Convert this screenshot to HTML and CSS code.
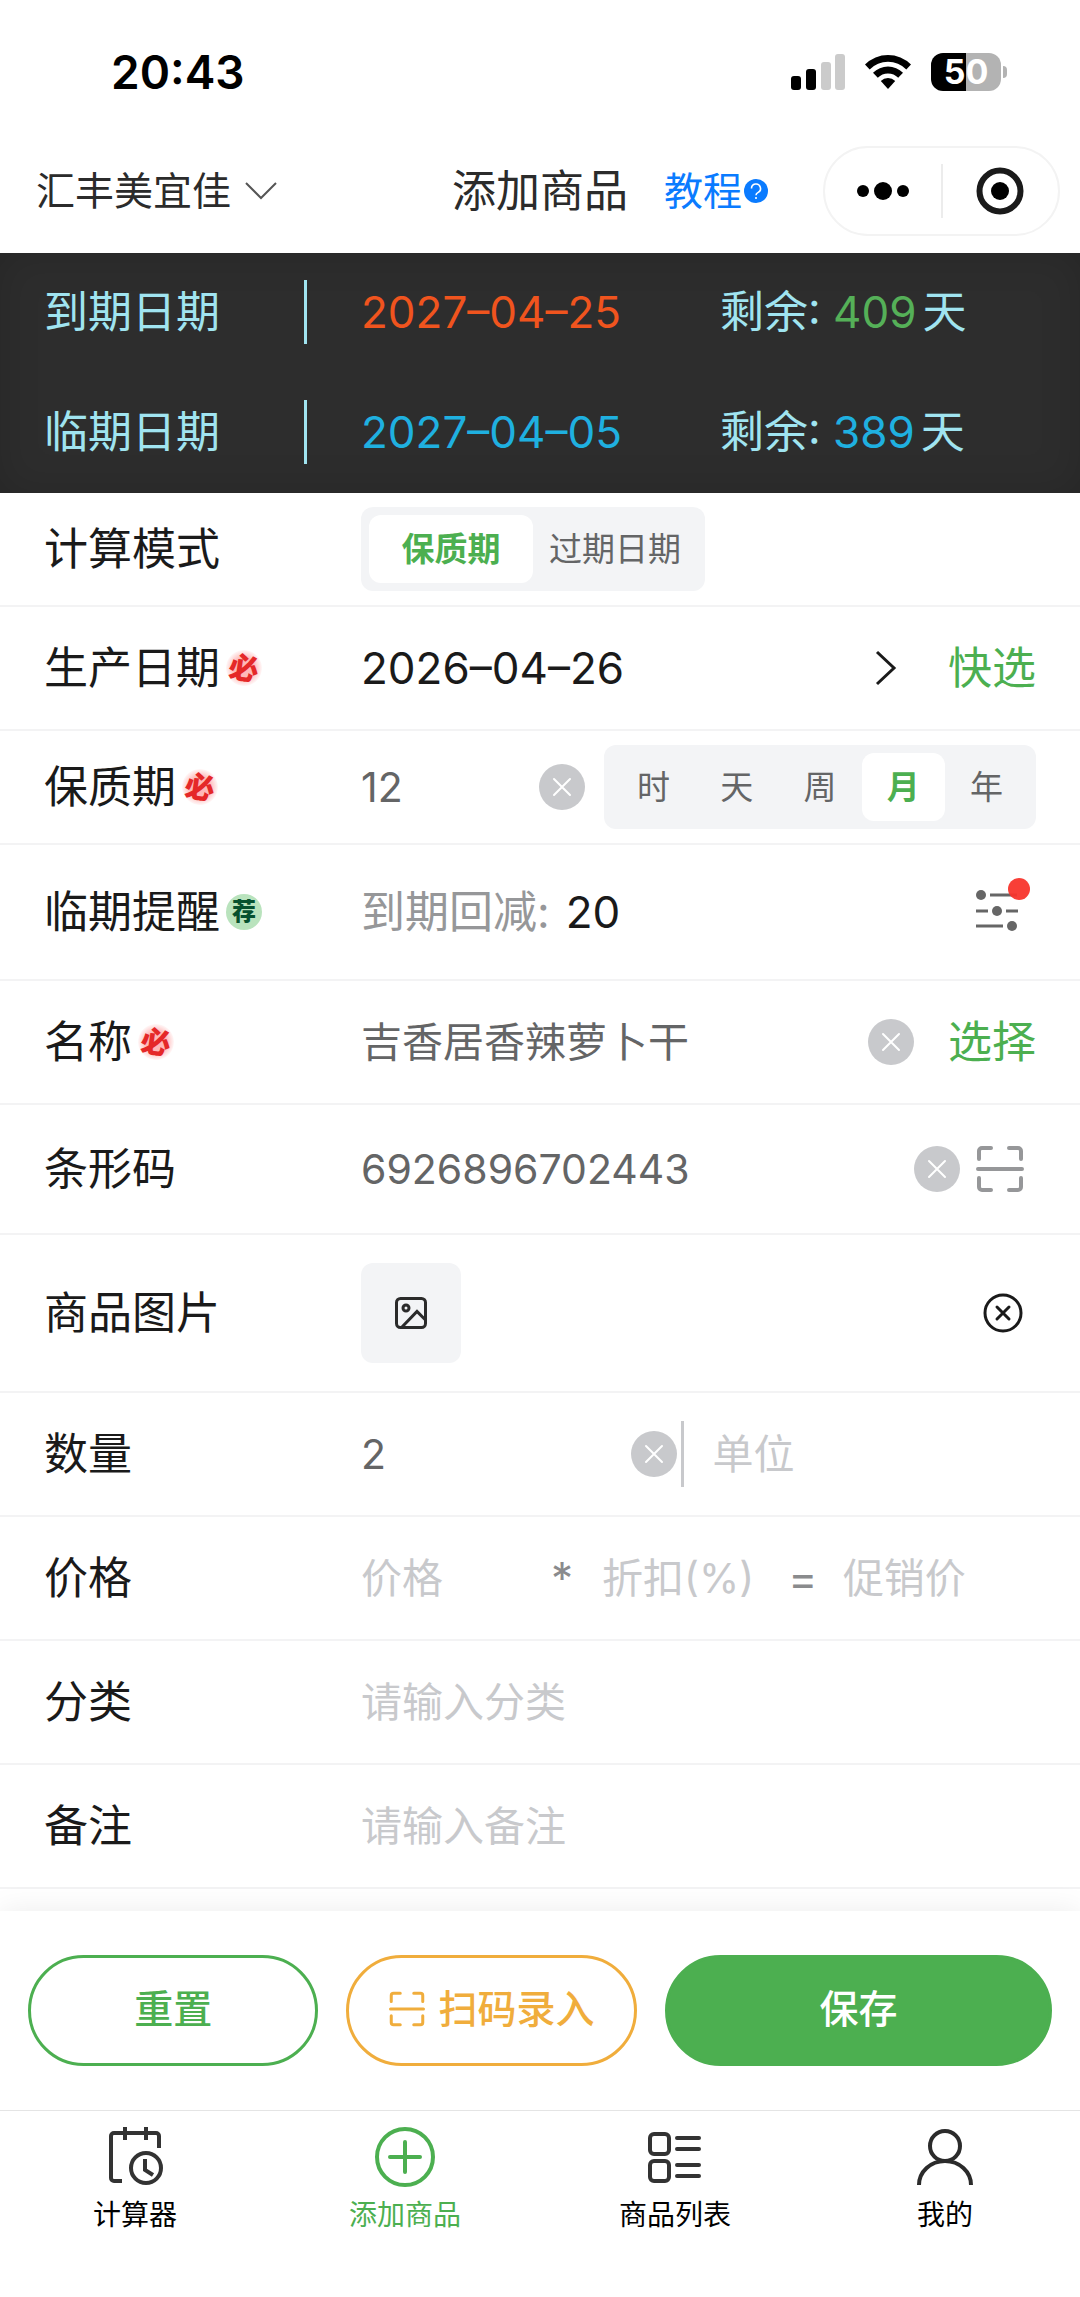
FILE: index.html
```html
<!DOCTYPE html>
<html lang="zh-CN">
<head>
<meta charset="utf-8">
<meta name="viewport" content="width=device-width, initial-scale=1">
<title>添加商品</title>
<link rel="stylesheet" href="styles.css">
</head>
<body>
<svg class="sprite" aria-hidden="true">
  <symbol id="clear" viewBox="0 0 46 46">
    <circle cx="23" cy="23" r="23" fill="#c8c9cc"/>
    <path d="M15 15l16 16M31 15L15 31" stroke="#fff" stroke-width="2" stroke-linecap="round"/>
  </symbol>
  <symbol id="scan" viewBox="0 0 48 48">
    <path d="M3 14V6a3 3 0 0 1 3-3h9M33 3h9a3 3 0 0 1 3 3v8M45 33v9a3 3 0 0 1-3 3h-9M15 45H6a3 3 0 0 1-3-3v-9M2 24h44" fill="none" stroke="currentColor" stroke-width="4" stroke-linecap="round"/>
  </symbol>
</svg>

<header class="top">
  <div class="status">
    <span class="clock">20:43</span>
    <div class="status-icons">
      <svg width="54" height="36" viewBox="0 0 54 36" aria-hidden="true">
        <rect x="0" y="22" width="10" height="14" rx="3"/>
        <rect x="15" y="15" width="10" height="21" rx="3"/>
        <rect x="30" y="8" width="10" height="28" rx="3" fill="#cbcbcb"/>
        <rect x="44" y="0" width="10" height="36" rx="3" fill="#cbcbcb"/>
      </svg>
      <svg width="46" height="36" viewBox="0 0 46 36" aria-hidden="true">
        <path d="M0 10.500A32.500 32.500 0 0 1 46 10.500L41.300 15.400A25.600 25.600 0 0 0 4.700 15.400Z"/>
        <path d="M8 18.800A21 21 0 0 1 38 18.800L33.200 23.700A14.400 14.400 0 0 0 12.800 23.700Z"/>
        <path d="M15.800 27A10.200 10.200 0 0 1 30.200 27L23 35Z"/>
      </svg>
      <div class="battery"><span class="battery-level">50</span></div>
    </div>
  </div>
  <nav class="navbar">
    <button class="store" type="button">汇丰美宜佳
      <svg width="32" height="18" viewBox="0 0 32 18" aria-hidden="true"><path d="M1 1l15 15L31 1" fill="none" stroke="#555" stroke-width="2"/></svg>
    </button>
    <h1 class="title">添加商品</h1>
    <div class="nav-right">
      <a class="tutorial" href="#help">教程
        <svg width="24" height="24" viewBox="0 0 24 24" aria-hidden="true"><circle cx="12" cy="12" r="12" fill="#0a7bff"/><path d="M7.500 9.500a4.500 4.500 0 1 1 6.700 3.900C12.700 14.200 12 14.800 12 16.200M12 18v2" fill="none" stroke="#fff" stroke-width="1.600"/></svg>
      </a>
      <div class="capsule">
        <button type="button" aria-label="更多"><svg width="54" height="20" viewBox="0 0 54 20"><circle cx="7" cy="10" r="6"/><circle cx="27" cy="10" r="9"/><circle cx="47" cy="10" r="6"/></svg></button>
        <button type="button" aria-label="关闭"><svg width="48" height="48" viewBox="0 0 48 48"><circle cx="24" cy="24" r="20.500" fill="none" stroke="currentColor" stroke-width="6"/><circle cx="24" cy="24" r="9"/></svg></button>
      </div>
    </div>
  </nav>
</header>

<section class="summary">
  <div class="summary-row">
    <span class="summary-label">到期日期</span>
    <span class="summary-date expire">2027–04–25</span>
    <span>剩余: <b class="days-ok">409</b>天</span>
  </div>
  <div class="summary-row">
    <span class="summary-label">临期日期</span>
    <span class="summary-date near">2027–04–05</span>
    <span>剩余: <b class="near">389</b>天</span>
  </div>
</section>

<form class="form" id="goods">
  <div class="row row-compact">
    <span class="label">计算模式</span>
    <div class="segment segment-mode">
      <button type="button" class="on">保质期</button>
      <button type="button">过期日期</button>
    </div>
  </div>
  <div class="row">
    <span class="label">生产日期<i class="badge must">必</i></span>
    <button class="date" type="button">2026–04–26
      <svg width="22" height="36" viewBox="0 0 22 36" aria-hidden="true"><path d="M2 2l17 16L2 34" fill="none" stroke="#1a1a1a" stroke-width="3"/></svg>
    </button>
    <button class="link link-date" type="button">快选</button>
  </div>
  <div class="row row-compact">
    <label class="label" for="life">保质期<i class="badge must">必</i></label>
    <input class="field" id="life" value="12">
    <button class="icon" type="button" aria-label="清除"><svg width="46" height="46"><use href="#clear"/></svg></button>
    <div class="segment segment-unit">
      <button type="button">时</button>
      <button type="button">天</button>
      <button type="button">周</button>
      <button type="button" class="on">月</button>
      <button type="button">年</button>
    </div>
  </div>
  <div class="row row-remind">
    <span class="label">临期提醒<i class="badge advise">荐</i></span>
    <span class="remind">到期回减:<span class="remind-days">20</span></span>
    <button class="icon tail" type="button" aria-label="提醒设置">
      <svg width="56" height="72" viewBox="0 0 56 72">
        <g stroke="#666" stroke-width="3"><path d="M14 19h27M0 35h12M30 35h12M0 50h27"/></g>
        <g fill="#666"><circle cx="5" cy="19" r="5"/><circle cx="21" cy="35" r="5"/><circle cx="36" cy="50" r="5"/></g>
        <circle cx="43" cy="13" r="11" fill="#f8352c" fill-opacity="0.950"/>
      </svg>
    </button>
  </div>
  <div class="row">
    <label class="label" for="name">名称<i class="badge must">必</i></label>
    <input class="field" id="name" value="吉香居香辣萝卜干">
    <button class="icon" type="button" aria-label="清除"><svg width="46" height="46"><use href="#clear"/></svg></button>
    <button class="link link-name" type="button">选择</button>
  </div>
  <div class="row row-barcode">
    <label class="label" for="barcode">条形码</label>
    <input class="field" id="barcode" value="6926896702443">
    <button class="icon" type="button" aria-label="清除"><svg width="46" height="46"><use href="#clear"/></svg></button>
    <button class="icon scan" type="button" aria-label="扫码"><svg width="48" height="48"><use href="#scan"/></svg></button>
  </div>
  <div class="row row-photo">
    <span class="label">商品图片</span>
    <button class="photo" type="button" aria-label="上传图片">
      <svg width="32" height="32" viewBox="0 0 32 32"><g fill="none" stroke="#2b2b2b" stroke-width="3"><rect x="1.500" y="1.500" width="29" height="29" rx="4"/><circle cx="11" cy="11" r="3"/><path d="M7 30L22 14.500l8 8"/></g></svg>
    </button>
    <button class="icon remove" type="button" aria-label="删除图片">
      <svg width="40" height="40" viewBox="0 0 40 40"><circle cx="20" cy="20" r="18" fill="none" stroke="#1a1a1a" stroke-width="3"/><path d="M14 14l12 12M26 14L14 26" stroke="#1a1a1a" stroke-width="3" stroke-linecap="round"/></svg>
    </button>
  </div>
  <div class="row">
    <label class="label" for="count">数量</label>
    <input class="field count" id="count" value="2">
    <button class="icon" type="button" aria-label="清除"><svg width="46" height="46"><use href="#clear"/></svg></button>
    <input class="field unit" aria-label="单位" placeholder="单位">
  </div>
  <div class="row">
    <label class="label" for="price">价格</label>
    <div class="prices">
      <input class="field" id="price" placeholder="价格">
      <span class="op">*</span>
      <input class="field" aria-label="折扣" placeholder="折扣(%)">
      <span class="op">=</span>
      <input class="field" aria-label="促销价" placeholder="促销价">
    </div>
  </div>
  <div class="row">
    <label class="label" for="kind">分类</label>
    <input class="field" id="kind" placeholder="请输入分类">
  </div>
  <div class="row">
    <label class="label" for="note">备注</label>
    <input class="field" id="note" placeholder="请输入备注">
  </div>
</form>

<div class="actions">
  <button class="btn reset" type="reset" form="goods">重置</button>
  <button class="btn scan-in" type="button"><svg width="36" height="36"><use href="#scan"/></svg>扫码录入</button>
  <button class="btn save" type="submit" form="goods">保存</button>
</div>

<nav class="tabbar">
  <a href="#calc">
    <svg width="64" height="64" viewBox="-2 0 64 64" fill="none" stroke="#333" stroke-width="4" aria-hidden="true"><path d="M17 55H9a3 3 0 0 1-3-3V10a3 3 0 0 1 3-3h42a3 3 0 0 1 3 3v12M20 1v13M41 1v13"/><circle cx="41" cy="42" r="15"/><path d="M40 33v11l8 5"/></svg>
    计算器
  </a>
  <a href="#add" class="current">
    <svg width="64" height="64" viewBox="0 0 64 64" fill="none" stroke="currentColor" stroke-width="4" stroke-linecap="round" aria-hidden="true"><circle cx="32" cy="31" r="28"/><path d="M17 31h30M32 16v30"/></svg>
    添加商品
  </a>
  <a href="#list">
    <svg width="64" height="64" viewBox="0 0 64 64" fill="none" stroke="#333" stroke-width="4" stroke-linecap="round" aria-hidden="true"><rect x="7" y="8" width="19" height="20" rx="4"/><rect x="7" y="35" width="19" height="20" rx="4"/><path d="M34 12h22M34 23h22M34 39h22M34 50h22"/></svg>
    商品列表
  </a>
  <a href="#me">
    <svg width="64" height="64" viewBox="0 0 64 64" fill="none" stroke="#2b2b2b" stroke-width="4" aria-hidden="true"><circle cx="32" cy="20" r="15"/><path d="M6 59a26 24 0 0 1 52 0"/></svg>
    我的
  </a>
</nav>
</body>
</html>
```
FILE: styles.css
```css
* { box-sizing: border-box; }

body {
  margin: 0;
  min-height: 100vh;
  display: flex;
  flex-direction: column;
  background: #fff;
  color: #1a1a1a;
  font: 44px/64px Inter, "Noto Sans CJK SC", sans-serif;
}

button, input {
  margin: 0;
  padding: 0;
  border: 0;
  background: none;
  color: inherit;
  font: inherit;
}

a { color: inherit; text-decoration: none; }
svg { display: block; flex: none; }
.sprite { position: absolute; width: 0; height: 0; }

/* header */
.status {
  display: flex;
  justify-content: space-between;
  align-items: center;
  height: 128px;
  padding: 16px 79px 0 111px;
}
.clock { font-size: 46px; font-weight: 600; color: #000; }
.status-icons { display: flex; align-items: center; gap: 20px; }
.battery {
  position: relative;
  width: 70px;
  height: 38px;
  border-radius: 12px;
  background: linear-gradient(90deg, #000 50%, #b3b3b3 50%);
  color: #fff;
  font-size: 34px;
  font-weight: 700;
  line-height: 38px;
  text-align: center;
}
.battery::after {
  content: "";
  position: absolute;
  left: 72px;
  top: 13px;
  width: 4px;
  height: 12px;
  border-radius: 0 4px 4px 0;
  background: #b3b3b3;
}

.navbar {
  display: grid;
  grid-template-columns: 1fr auto 1fr;
  align-items: center;
  height: 125px;
}
.store {
  display: flex;
  align-items: center;
  gap: 14px;
  padding-left: 36px;
  font-size: 39px;
  color: #2b2b2b;
}
.title { margin: 0; font-size: 44px; font-weight: 400; color: #2b2b2b; }
.nav-right {
  display: flex;
  align-items: center;
  justify-content: space-between;
  padding: 0 20px 0 36px;
}
.tutorial { display: flex; align-items: center; gap: 2px; font-size: 39px; color: #0a7bff; }
.capsule {
  display: flex;
  width: 237px;
  height: 90px;
  padding: 16px 0;
  border: 2px solid #f3f3f3;
  border-radius: 45px;
}
.capsule button { flex: 1; display: flex; align-items: center; justify-content: center; }
.capsule button + button { border-left: 2px solid #ececec; }

/* date summary */
.summary {
  background: #2d2d2d;
  box-shadow: inset 0 0 40px rgba(0, 0, 0, 0.15);
  color: #a0e4f0;
}
.summary-row {
  display: grid;
  grid-template-columns: 263px 305px 1fr;
  column-gap: 54px;
  align-items: center;
  height: 120px;
  padding: 0 44px 2px;
}
.summary-label { border-right: 3px solid #a0e4f0; }
.summary b { margin-right: 6px; font-weight: 400; }
.summary .expire { color: #f0541e; }
.summary .near { color: #1fb0e0; }
.summary .days-ok { color: #55b058; }

/* form */
.form { flex: 1; }
.row {
  display: flex;
  align-items: center;
  height: 124px;
  padding: 0 44px;
  border-bottom: 2px solid #f3f3f4;
}
.row-compact { height: 114px; }
.row-remind { height: 136px; }
.row-barcode { height: 130px; }
.row-photo { height: 158px; }

.label { flex: none; display: flex; align-items: center; width: 317px; }
.badge {
  width: 36px;
  height: 36px;
  margin-left: 6px;
  border-radius: 50%;
  font-style: normal;
  font-weight: 900;
  line-height: 36px;
  text-align: center;
}
.must {
  background: radial-gradient(#ffb8b8 40%, #fff 74%);
  color: #e52828;
  font-size: 30px;
  transform: rotate(8deg);
}
.advise { background: #b9e3bd; color: #06512f; font-size: 24px; }

.field {
  flex: 1;
  min-width: 0;
  height: 64px;
  outline: 0;
  font-size: 41px;
  color: #646566;
}
.field::placeholder { color: #c8c9cc; opacity: 1; }

.segment {
  display: grid;
  grid-auto-flow: column;
  grid-auto-columns: 1fr;
  height: 84px;
  padding: 8px;
  border-radius: 12px;
  background: #f3f4f6;
  font-size: 33px;
  line-height: 48px;
  color: #646566;
}
.segment .on { border-radius: 12px; background: #fff; color: #4caf50; font-weight: 700; }
.segment-mode { width: 344px; }
.segment-unit { width: 432px; margin-left: 19px; }

.date { flex: 1; display: flex; align-items: center; justify-content: space-between; }
.link { color: #4caf50; }
.link-date { margin-left: 51px; }
.link-name { margin-left: 34px; }
.icon { flex: none; }
.scan { margin: 0 12px 0 16px; color: #969799; }
.remind { color: #969799; }
.remind-days { margin-left: 16px; color: #1a1a1a; }
.tail { margin-left: auto; padding-right: 4px; }
.photo {
  display: grid;
  place-items: center;
  width: 100px;
  height: 100px;
  border-radius: 12px;
  background: #f3f4f6;
}
.remove { margin: 0 13px 0 auto; }
.count { flex: 5; }
.unit { flex: 6; height: 66px; margin-left: 4px; padding-left: 29px; border-left: 3px solid #c8c9cc; }
.prices {
  flex: 1;
  display: grid;
  grid-template-columns: 5fr 80px 5fr 80px 6fr;
  align-items: center;
}
.op { color: #8a8b8d; text-align: center; }

/* bottom actions */
.actions {
  position: relative;
  display: grid;
  grid-template-columns: 3fr 3fr 4fr;
  gap: 28px;
  padding: 44px 28px;
  background: #fff;
  box-shadow: 0 0 28px rgba(0, 0, 0, 0.08);
}
.btn {
  display: flex;
  align-items: center;
  justify-content: center;
  gap: 14px;
  height: 111px;
  padding-bottom: 4px;
  border: 3px solid;
  border-radius: 56px;
  font-size: 39px;
  font-weight: 500;
}
.reset { color: #4caf50; }
.scan-in { color: #f0ad3c; }
.save { border-color: #4caf50; background: #4caf50; color: #fff; }

/* tab bar */
.tabbar {
  position: relative;
  display: grid;
  grid-template-columns: repeat(4, 1fr);
  padding: 15px 0 62px;
  border-top: 1px solid #e4e4e4;
  background: #fff;
  color: #000;
  font-size: 28px;
  line-height: 40px;
}
.tabbar a { display: flex; flex-direction: column; align-items: center; gap: 5px; }
.tabbar .current { color: #4caf50; }
```
